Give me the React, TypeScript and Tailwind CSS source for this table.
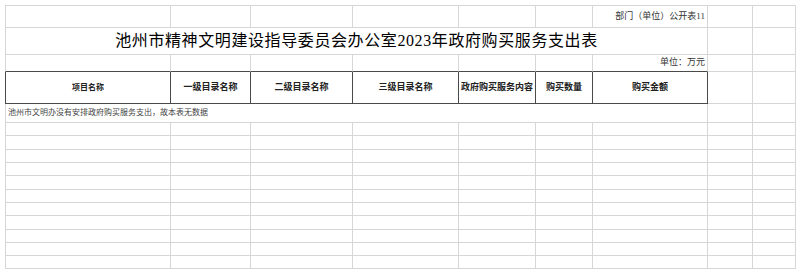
import React from "react";

const FONT = { fontFamily: '"Liberation Serif", "Noto Sans CJK SC", serif' };

const L = "border-[#d6d6d6]";

function Cell({
  className = "",
  children,
}: {
  className?: string;
  children?: React.ReactNode;
}) {
  return <div className={`border-r border-b ${L} ${className}`}>{children}</div>;
}

export default function App() {
  const emptyRows = 11;
  return (
    <div className="w-[800px] h-[274px] bg-white pl-[5px] pt-[5px]" style={FONT}>
      <div
        className={`grid w-[791px] border-t ${L} grid-cols-[166px_80px_102px_106px_77px_57px_115px_45px_43px] grid-rows-[22px_27px_17px_32px_19px_13px_14px_13px_13px_14px_13px_13px_14px_13px_13px_13px]`}
      >
        {/* Row 1 */}
        <Cell className="border-l" />
        <Cell />
        <Cell />
        <Cell />
        <Cell />
        <Cell />
        <Cell className="flex items-center justify-end pr-[2px] text-[9px] text-[#333] whitespace-nowrap">
          部门（单位）公开表11
        </Cell>
        <Cell />
        <Cell />

        {/* Row 2: title */}
        <Cell className="col-span-7 border-l flex items-center justify-center text-[16px] tracking-[0.6px] text-black whitespace-nowrap">
          池州市精神文明建设指导委员会办公室2023年政府购买服务支出表
        </Cell>
        <Cell />
        <Cell />

        {/* Row 3: unit */}
        <Cell className="border-l !border-b-[#4a4a4a]" />
        <Cell className="!border-b-[#4a4a4a]" />
        <Cell className="!border-b-[#4a4a4a]" />
        <Cell className="!border-b-[#4a4a4a]" />
        <Cell className="!border-b-[#4a4a4a]" />
        <Cell className="!border-b-[#4a4a4a]" />
        <Cell className="!border-b-[#4a4a4a] flex items-center justify-end pr-[2px] text-[9px] text-[#333] whitespace-nowrap">
          单位：万元
        </Cell>
        <Cell />
        <Cell />

        {/* Row 4: header */}
        {[
          "项目名称",
          "一级目录名称",
          "二级目录名称",
          "三级目录名称",
          "政府购买服务内容",
          "购买数量",
          "购买金额",
        ].map((t, i) => (
          <div
            key={t}
            className={`border-r border-b border-[#4a4a4a] ${
              i === 0 ? "border-l" : ""
            } flex items-center justify-center font-bold ${
              i === 0 ? "text-[8px]" : "text-[9px]"
            } text-[#222] whitespace-nowrap`}
          >
            {t}
          </div>
        ))}
        <Cell />
        <Cell />

        {/* Row 5: note */}
        <Cell className="col-span-7 border-l flex items-center pl-[2px] text-[8px] text-[#444] whitespace-nowrap">
          池州市文明办没有安排政府购买服务支出，故本表无数据
        </Cell>
        <Cell />
        <Cell />

        {/* Empty rows */}
        {Array.from({ length: emptyRows }).map((_, r) =>
          Array.from({ length: 9 }).map((_, c) => (
            <Cell key={`${r}-${c}`} className={c === 0 ? "border-l" : ""} />
          ))
        )}
      </div>
    </div>
  );
}
